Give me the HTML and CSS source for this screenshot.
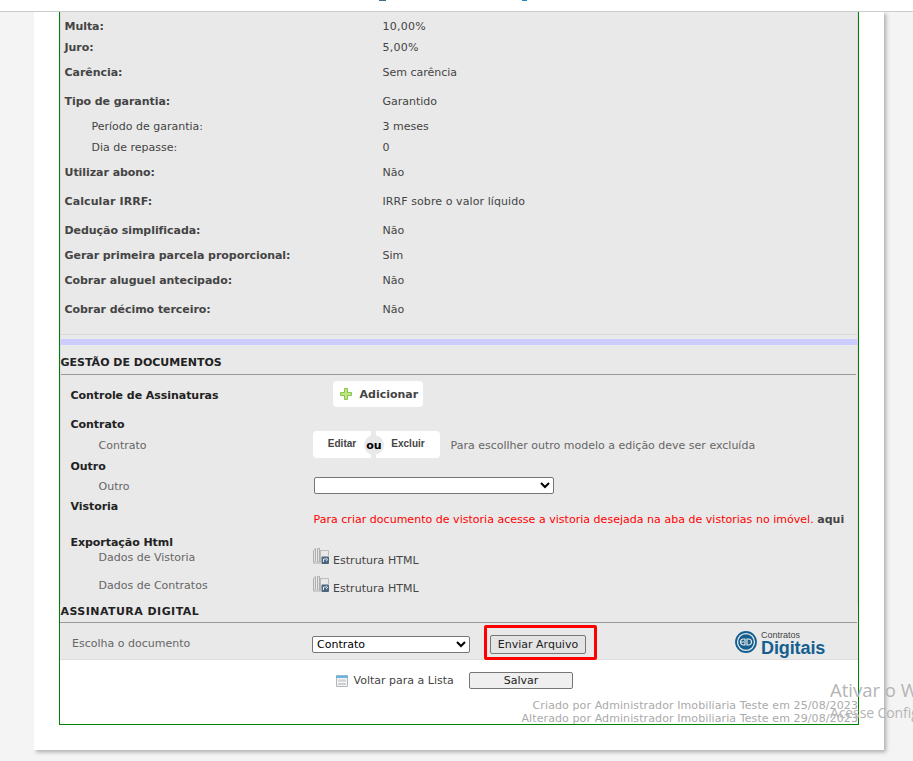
FILE: index.html
```html
<!DOCTYPE html>
<html lang="pt-BR">
<head>
<meta charset="utf-8">
<title>Contrato</title>
<link rel="stylesheet" href="styles.css">
</head>
<body>
<svg class="defs" width="0" height="0">
  <symbol id="export" viewBox="0 0 16 16">
    <path d="M.5 2.500l2-2v13l-2 1zM4.500 .5h2v13.500h-2z" fill="#e2e2e2" stroke="#b0b0b0"/>
    <path d="M0 15h8" stroke="#c2c2c2" stroke-width="1.500" fill="none"/>
    <path d="M7 2.500h8.500V8M7.500 3v11" fill="none" stroke="#bbb"/>
    <rect x="8.500" y="8.500" width="7.500" height="7.500" rx="1" fill="#4a667e"/>
    <path d="M10.500 14v-3h3M13 9.800l1.800 1.700L13 13.200" fill="none" stroke="#e3eaf0"/>
  </symbol>
</svg>
<header class="topbar"><i class="mark mark-a"></i><i class="mark mark-b"></i></header>
<main class="page">
  <div class="frame">
    <section class="terms">
      <dl>
        <div class="term"><dt>Multa:</dt><dd class="wide">10,00%</dd></div>
        <div class="term gap-s"><dt>Juro:</dt><dd class="wide">5,00%</dd></div>
        <div class="term gap-m"><dt>Carência:</dt><dd>Sem carência</dd></div>
        <div class="term gap-l"><dt>Tipo de garantia:</dt><dd>Garantido</dd></div>
        <div class="term sub gap-m"><dt>Período de garantia:</dt><dd>3 meses</dd></div>
        <div class="term sub gap-s"><dt>Dia de repasse:</dt><dd>0</dd></div>
        <div class="term gap-m"><dt>Utilizar abono:</dt><dd>Não</dd></div>
        <div class="term gap-l"><dt class="irrf">Calcular IRRF:</dt><dd class="tax">IRRF sobre o valor líquido</dd></div>
        <div class="term gap-l"><dt>Dedução simplificada:</dt><dd>Não</dd></div>
        <div class="term gap-m"><dt>Gerar primeira parcela proporcional:</dt><dd>Sim</dd></div>
        <div class="term gap-m"><dt>Cobrar aluguel antecipado:</dt><dd>Não</dd></div>
        <div class="term gap-l"><dt>Cobrar décimo terceiro:</dt><dd>Não</dd></div>
      </dl>
    </section>
    <section class="docs">
      <h2>GESTÃO DE DOCUMENTOS</h2>
      <div class="row row-sign"><h3>Controle de Assinaturas</h3>
        <button class="add"><svg width="12" height="12" viewBox="0 0 12 12"><path d="M4.500 .5h3v4h4v3h-4v4h-3v-4h-4v-3h4z" fill="#b9e884" stroke="#8dc34c"/></svg><span>Adicionar</span></button></div>
      <h3 class="group group-contract">Contrato</h3>
      <div class="row row-contract"><span class="label">Contrato</span>
        <div class="choice"><button class="edit">Editar</button><button class="remove">Excluir</button><b class="or">ou</b></div>
        <span class="hint">Para escollher outro modelo a edição deve ser excluída</span></div>
      <h3 class="group">Outro</h3>
      <div class="row row-other"><span class="label">Outro</span><select class="other"><option></option></select></div>
      <h3 class="group group-survey">Vistoria</h3>
      <p class="warning">Para criar documento de vistoria acesse a vistoria desejada na aba de vistorias no imóvel. <b>aqui</b></p>
      <h3 class="group group-export">Exportação Html</h3>
      <div class="row row-export"><span class="label">Dados de Vistoria</span><svg width="16" height="16"><use href="#export"/></svg><a>Estrutura HTML</a></div>
      <div class="row row-export"><span class="label">Dados de Contratos</span><svg width="16" height="16"><use href="#export"/></svg><a>Estrutura HTML</a></div>
    </section>
    <section class="signature">
      <h2>ASSINATURA DIGITAL</h2>
      <div class="send-row">
        <span class="send-label">Escolha o documento</span>
        <select class="doc"><option>Contrato</option></select>
        <div class="highlight"><button class="plain send">Enviar Arquivo</button></div>
        <div class="brand">
          <svg width="22" height="22" viewBox="0 0 22 22"><circle cx="11" cy="11" r="10" fill="none" stroke="#145f90" stroke-width="1.800"/><circle cx="11" cy="11" r="7.800" fill="#145f90"/><path d="M10 8H8.500a3 3 0 000 6H10zM12 8h1.500a3 3 0 010 6H12z" fill="none" stroke="#e9e9e9" stroke-width="1.200"/><path d="M6 11h3" stroke="#e9e9e9"/></svg>
          <div class="brand-name"><span>Contratos</span><strong>Digitais</strong></div>
        </div>
      </div>
    </section>
    <footer>
      <div class="actions">
        <svg width="12" height="12" viewBox="0 0 12 12"><path d="M.5.500h11v11H.5z" fill="#f3f3f3" stroke="#b0b8bc"/><path d="M0 1h12v2H0z" fill="#69b4dc"/><path d="M0 .5h12" stroke="#9bb9ca"/><path d="M2 4.500h8v2H2zM2 8h8v2H2z" fill="#d0d0d0"/></svg>
        <a>Voltar para a Lista</a><button class="plain save">Salvar</button>
      </div>
      <p class="audit">Criado por Administrador Imobiliaria Teste em 25/08/2023<br>Alterado por Administrador Imobiliaria Teste em 29/08/2023</p>
    </footer>
  </div>
</main>
<aside class="watermark"><div class="wm-title">Ativar o Windows</div><div class="wm-text">Acesse Configurações</div></aside>
</body>
</html>
```
FILE: styles.css
```css
* { box-sizing: border-box; }
body { margin: 0; height: 761px; overflow: hidden; position: relative; background: #f4f4f4; font: 11px/16px Verdana, "DejaVu Sans", sans-serif; color: #444; }
h2, h3, p, dl, dd { margin: 0; font-size: 11px; }
svg { display: block; flex: none; }
.defs { position: absolute; }
button, select { font: inherit; padding: 0; margin: 0; }
.topbar { height: 12px; background: #fff; border-bottom: 1px solid #ccc; position: relative; }
.mark { position: absolute; top: 0; height: 1px; }
.mark-a { left: 379px; width: 7px; background: #3c6c8c; }
.mark-b { left: 522px; width: 5px; background: #2386c6; }
.page { margin-left: 34px; width: 850px; height: 738px; padding-left: 25px; background: #fff; box-shadow: 2px 2px 4px #aaa; clip-path: inset(0 -9px -9px 0); }
.frame { width: 800px; height: 713px; border: 1px solid #008000; border-top: 0; }
.terms { height: 333px; background: #e9e9e9; border-bottom: 6px solid #ccf; padding-top: 7px; border-left: 1px solid #ddd; border-right: 1px solid #ddd; }
.terms dl { height: 316px; border-bottom: 1px solid #d9d9d9; padding-left: 3.500px; }
.term { display: flex; height: 16px; }
.term dt { width: 318px; font-weight: bold; letter-spacing: -.05px; }
.term dt.irrf { letter-spacing: .1px; }
.wide { letter-spacing: .25px; }
.tax { letter-spacing: .08px; }
.term.sub dt { padding-left: 27px; font-weight: normal; letter-spacing: 0; }
.gap-s { margin-top: 5px; }
.gap-m { margin-top: 9px; }
.gap-l { margin-top: 13px; }
h2 { color: #222; margin-right: 1px; border-bottom: 1px solid #999; }
h3 { color: #222; letter-spacing: -.05px; }
.docs { background: #e9e9e9; height: 260px; border-left: 1px solid #ddd; border-right: 1px solid #ddd; }
.docs h2 { height: 30px; padding-top: 10px; margin-left: -.5px; }
.row { display: flex; align-items: center; padding-left: 9.500px; color: #666; }
.row-sign { height: 38px; }
.row-sign h3 { width: 262.500px; padding-top: 3px; }
.add { display: flex; align-items: center; width: 90px; height: 26px; padding-left: 7px; gap: 7.500px; border: 0; border-radius: 4px; background: #fff; color: #444; font-weight: bold; }
.add span { padding-top: 2px; }
.group { padding: 1px 0 0 9.500px; height: 16px; }
.group-contract { height: 18px; padding-top: 4px; }
.row-contract { height: 27px; }
.label { padding: 2px 0 0 28px; width: 242.500px; }
.choice { position: relative; display: flex; gap: 5px; width: 127px; }
.choice button { height: 27px; border: 0; background: #fff; color: #444; font: bold 10px/24px "Liberation Sans", Arial, sans-serif; padding-bottom: 1px; }
.edit { width: 58px; border-radius: 4px 0 0 4px; }
.remove { width: 64px; border-radius: 0 4px 4px 0; }
.or { position: absolute; left: 51px; top: 4px; width: 20px; height: 20px; line-height: 21px; border-radius: 50%; background: #e9e9e9; color: #000; text-align: center; }
.hint { margin-left: 10.500px; padding-top: 2px; }
.row-other { height: 23px; }
select { background: #fff; color: #000; border: 1px solid #767676; border-radius: 2px; }
.other { width: 240px; height: 17px; margin-left: 1px; }
.group-survey { padding-top: 2px; }
.warning { height: 12px; line-height: 14px; padding-left: 252.500px; color: #f00; white-space: nowrap; letter-spacing: .025px; }
.warning b { color: #444; }
.group-export { height: 24px; padding-top: 10px; }
.row-export { height: 28px; align-items: flex-start; }
.row-export .label { padding-top: 1px; }
.row-export svg { margin-top: -1px; }
.row-export a { margin: 4px 0 0 4px; color: #444; letter-spacing: .04px; }
.signature { height: 55px; background: #e9e9e9; border-bottom: 1px solid #ddd; }
.signature h2 { height: 18px; line-height: 14px; padding-left: .5px; letter-spacing: .45px; }
.send-row { display: flex; height: 36px; align-items: center; padding-left: 12px; }
.send-label { width: 240px; color: #666; padding-top: 6px; }
.doc { width: 158px; height: 17px; margin-top: 7px; }
.highlight { width: 113px; height: 35px; margin-left: 14px; margin-top: 3px; border: 3px solid #f00; padding: 7px 3px; border-radius: 2px; }
.plain { border: 1px solid #767676; border-radius: 2px; background: #efefef; color: #222; }
.send { display: block; width: 96px; height: 19px; line-height: 18px; background: #e4e4e4; }
.brand { display: flex; margin-left: 138px; gap: 4px; padding-top: 5px; }
.brand-name { display: flex; flex-direction: column; font-family: "Liberation Sans", Arial, sans-serif; height: 26px; }
.brand-name span { font-size: 9px; line-height: 9px; color: #444; }
.brand-name strong { font-size: 18px; line-height: 16px; color: #145f90; letter-spacing: -.1px; }
footer { padding-top: 10px; }
.actions { display: flex; height: 20px; align-items: center; padding-left: 276px; }
.actions svg { margin-top: 1px; }
.actions a { width: 115.500px; margin-left: 5.500px; padding-top: 1px; white-space: nowrap; }
.save { width: 104px; height: 17px; line-height: 15px; }
.audit { margin-top: 9px; text-align: right; line-height: 13px; color: #aaa; letter-spacing: .1px; }
.watermark { position: absolute; left: 830px; top: 677px; width: 83px; overflow: hidden; white-space: nowrap; font-family: "Segoe UI", "Open Sans", sans-serif; color: #b4b4b4; }
.wm-title { font-size: 18.500px; line-height: 26px; }
.wm-text { font-size: 14px; line-height: 20px; letter-spacing: -.1px; }
```
